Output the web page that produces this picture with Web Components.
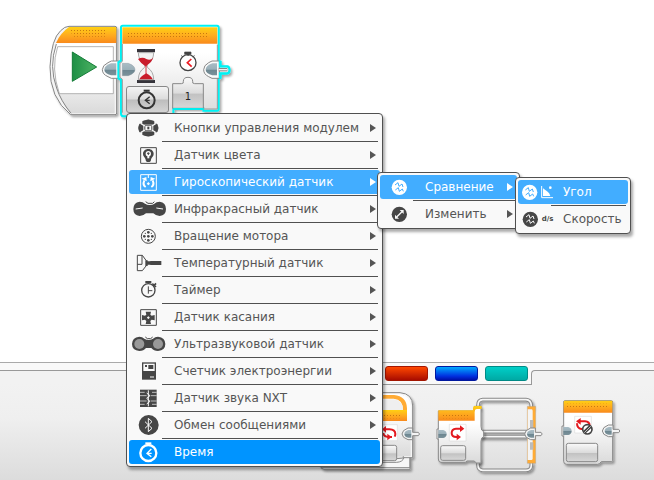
<!DOCTYPE html>
<html lang="ru">
<head>
<meta charset="utf-8">
<title>Программа</title>
<style>
html,body{height:100%;margin:0}
body{font-family:"DejaVu Sans",Verdana,sans-serif;font-size:12px;color:#505050;background:#fff;overflow:hidden}
</style>
</head>
<body>
<ev3-editor>
  <ev3-program slot="canvas"></ev3-program>
  <ev3-palette slot="palette"></ev3-palette>
  <ev3-menu slot="overlay" label="Режим" style="--x:126px;--y:113px;--min:251px">
    <ev3-item icon="bricks" more>Кнопки управления модулем</ev3-item>
    <ev3-item icon="color" more>Датчик цвета</ev3-item>
    <ev3-item icon="gyro" more open>Гироскопический датчик</ev3-item>
    <ev3-item icon="infrared" more>Инфракрасный датчик</ev3-item>
    <ev3-item icon="motor" more>Вращение мотора</ev3-item>
    <ev3-item icon="temperature" more>Температурный датчик</ev3-item>
    <ev3-item icon="timer" more>Таймер</ev3-item>
    <ev3-item icon="touch" more>Датчик касания</ev3-item>
    <ev3-item icon="ultrasonic" more>Ультразвуковой датчик</ev3-item>
    <ev3-item icon="energy" more>Счетчик электроэнергии</ev3-item>
    <ev3-item icon="sound" more>Датчик звука NXT</ev3-item>
    <ev3-item icon="message" more>Обмен сообщениями</ev3-item>
    <ev3-item icon="time" current>Время</ev3-item>
  </ev3-menu>
  <ev3-menu slot="overlay" label="Гироскопический датчик" style="--x:377px;--y:172px;--min:137px">
    <ev3-item icon="compare" more open>Сравнение</ev3-item>
    <ev3-item icon="change" more>Изменить</ev3-item>
  </ev3-menu>
  <ev3-menu slot="overlay" label="Сравнение" style="--x:515px;--y:177px;--min:110px">
    <ev3-item icon="angle" open>Угол</ev3-item>
    <ev3-item icon="rate">Скорость</ev3-item>
  </ev3-menu>
</ev3-editor>
<script>
const define = (name, html, setup) => customElements.define(name, class extends HTMLElement {
  constructor() {
    super();
    this.attachShadow({mode: 'open'}).innerHTML = html(this);
  }
  connectedCallback() { if (setup) setup(this, this.shadowRoot); }
});

/* Icons use a 120x72 grid, drawn at 40x24. The "paper" colour is the row's background. */
const watch = (x, y, r, w) => `
  <circle cx="${x}" cy="${y}" r="${r}" fill="none" stroke="currentColor" stroke-width="${w}"/>
  <path d="M${x-9} ${y-r-8}h18v6h-18z" fill="currentColor"/>`;
const squiggle = (x, y, c) => `
  <circle cx="${x}" cy="${y}" r="23" fill="currentColor"/>
  <path d="M${x-13} ${y-7}l9-7 3 11 9-7 3 9M${x-12} ${y+8}l9-7 3 11 9-7 3 7" fill="none" stroke="${c}" stroke-width="3"/>`;
const icons = {
  bricks: `<path d="M41 16q17-9 34 0v9h-34zM41 56q17 9 34 0v-9h-34zM42 26v20l-10 2q-7-12 0-24zM74 26v20l10 2q7-12 0-24z" fill="currentColor" stroke="currentColor" stroke-width="2"/>
    <path d="M46 27h24v18H46z" fill="currentColor"/><path d="M37 24l11 6M79 24l-11 6M37 48l11-6M79 48l-11-6" stroke="var(--paper)" stroke-width="4"/><path d="M49 29h18v14H49z" fill="var(--paper)"/><path d="M55 32h6v8h-6z" fill="currentColor"/>`,
  color: `<path d="M35 14h47v47H35z" fill="none" stroke="currentColor" stroke-width="3"/>
    <path d="M58 18c-10 0-16 7-16 14 0 9 7 11 8 18q0 7 8 7t8-7c1-7 8-9 8-18 0-7-6-14-16-14z" fill="currentColor"/>
    <circle cx="58" cy="32" r="8" fill="var(--paper)"/><path d="M55 38h6v8h-6z" fill="var(--paper)"/><path d="M58 28v8M54 31h8" stroke="currentColor" stroke-width="3"/>`,
  gyro: `<path d="M35 14h47v47H35z" fill="none" stroke="currentColor" stroke-width="3"/><path d="M58 14v10" stroke="currentColor" stroke-width="3"/>
    <path d="M58 36l5 5-5 5-5-5z" fill="currentColor"/><path d="M50 51Q40 45 46 31M67 51q10-6 4-20" fill="none" stroke="currentColor" stroke-width="6"/>
    <path d="M38 26l14-5 1 13zM79 26l-14-5-1 13z" fill="currentColor"/>`,
  infrared: `<path d="M32 14q10 0 16 6 14 8 28 0 6-6 16-6 19 3 19 22t-19 21q-11 0-19-8H51q-8 8-19 8-19-2-19-21t19-22z" fill="currentColor"/>
    <path d="M46 14l7 8h20l7-8z" fill="var(--paper)"/><path d="M50 14l7 5h14l5-5" fill="none" stroke="currentColor" stroke-width="3"/><path d="M20 36l21-3M82 33l20 3" stroke="var(--paper)" stroke-width="3"/>`,
  motor: `<circle cx="58" cy="37" r="21" fill="none" stroke="currentColor" stroke-width="3"/>
    <g fill="currentColor"><circle cx="58" cy="37" r="4"/><circle cx="58" cy="25" r="4"/><circle cx="58" cy="49" r="4"/><circle cx="46" cy="37" r="4"/><circle cx="70" cy="37" r="4"/><circle cx="49" cy="28" r="2"/><circle cx="67" cy="28" r="2"/><circle cx="49" cy="46" r="2"/><circle cx="67" cy="46" r="2"/></g>`,
  temperature: `<path d="M25 13h15l11 15v17L40 59H25zM25 40h14V13" fill="none" stroke="currentColor" stroke-width="3"/><path d="M50 28h6v3h8v-1h33v12H64v-1h-8v4h-6z" fill="currentColor"/>`,
  timer: `${watch(58,37,20,4)}<path d="M58 25v22M58 38h12" stroke="currentColor" stroke-width="3"/><path d="M70 17l11 10M73 25l8-9" stroke="currentColor" stroke-width="5"/>`,
  touch: `<path d="M35 14h47v47H35z" fill="none" stroke="currentColor" stroke-width="3"/><path d="M50 20h16l-2 9 4 3 9-2v16l-9-2-4 4 2 9H50l2-9-4-4-9 2V30l9 2 4-3z" fill="currentColor"/><path d="M58 34v8M54 38h8" stroke="var(--paper)" stroke-width="3"/>`,
  ultrasonic: `<path d="M31 14q9 0 15 6 13 8 26 0 6-6 15-6 22 3 22 22T87 57q-13 0-20-9H51q-7 9-20 9Q9 55 9 36t22-22z" fill="currentColor"/><circle cx="31" cy="36" r="15" fill="#999"/><circle cx="87" cy="36" r="15" fill="#999"/><path d="M43 14l6 6h20l6-6z" fill="var(--paper)"/><path d="M49 15l6 5h10l6-5" fill="none" stroke="currentColor" stroke-width="3"/>`,
  energy: `<path d="M39 10h42v52H39z" fill="currentColor"/><path d="M43 14h34v22H43z" fill="var(--paper)"/><path d="M48 18h6v6h-6zM58 18h15v12H58z" fill="currentColor"/><path d="M63 54h12" stroke="var(--paper)" stroke-width="3"/>`,
  sound: `<path d="M33 11h50v52H33z" fill="currentColor"/><path d="M33 19h14M69 19h14M33 29h20M65 29h18M33 45h20M65 45h18M33 55h14M69 55h14" stroke="var(--paper)" stroke-width="2"/><path d="M58 13v48M53 21l10 8-10 8 10 9-10 8" fill="none" stroke="var(--paper)" stroke-width="3"/>`,
  message: `<circle cx="59" cy="36" r="30" fill="currentColor"/><path d="M48 26l21 20-11 10V16l11 10-21 20" fill="none" stroke="var(--paper)" stroke-width="3"/>`,
  time: `${watch(58,39,24,7)}<path d="M67 27L54 40l13 10M54 40h14" fill="none" stroke="currentColor" stroke-width="4"/>`,
  compare: squiggle(58, 37, 'var(--paper)'),
  change: `<circle cx="58" cy="37" r="23" fill="currentColor"/><path d="M50 45l16-16" stroke="var(--paper)" stroke-width="4"/><path d="M59 24h12v12zM45 38v12h12z" fill="var(--paper)"/>`,
  angle: `${squiggle(35, 37, 'var(--paper)')}<path d="M71 18v35h34" fill="none" stroke="currentColor" stroke-width="3"/><path d="M75 25v23h22q-2-9-8-13z" fill="currentColor"/><circle cx="97" cy="23" r="4" fill="currentColor"/>`,
  rate: `${squiggle(37, 37, 'var(--paper)')}<text x="71" y="42" font-size="21" font-weight="bold" fill="currentColor">d/s</text>`
};

define('ev3-item', el => `
<style>
:host{display:block;--paper:#f9f9f9}
:host([open]){--paper:#42adff}
:host([current]){--paper:#0094ff}
button{display:flex;align-items:center;width:100%;height:24px;margin:0;padding:0 4px 0 0;border:0;border-radius:3px;background:var(--paper);color:#555;font:inherit;white-space:nowrap;text-align:left}
:host([open]) button,:host([current]) button{color:#fff}
.icon{flex:none;width:40px;height:24px;margin-right:5px}
:host(:not([open],[current])) .icon{color:#464646}
.label{flex:1}
.more{flex:none;width:6px;height:8px;margin-left:10px}
</style>
<button type="button" role="menuitem">
<svg class="icon" viewBox="0 0 120 72" aria-hidden="true">${icons[el.getAttribute('icon')] || ''}</svg>
<span class="label"><slot></slot></span>
${el.hasAttribute('more') ? '<svg class="more" viewBox="0 0 6 8" aria-hidden="true"><path d="M0 0l6 4-6 4z" fill="currentColor"/></svg>' : ''}
</button>`);

define('ev3-menu', () => `
<style>
:host{position:absolute;left:var(--x);top:var(--y);display:block;min-width:var(--min);padding:2px;border:1px solid #505050;border-radius:4px;background:#f9f9f9;box-shadow:2px 3px 3px #0005}
::slotted(ev3-item:not(:last-child)){padding-bottom:3px;background:linear-gradient(#505050,#505050) 33px 25px / calc(100% - 35px) 1px no-repeat}
</style>
<slot></slot>`, el => { el.setAttribute('role', 'menu'); el.setAttribute('aria-label', el.getAttribute('label')); });

const defs = `
<linearGradient id="or" x1="0" y1="0" x2="0" y2="1"><stop offset="0" stop-color="#ffd013"/><stop offset=".45" stop-color="#ffb01e"/><stop offset="1" stop-color="#f98a1c"/></linearGradient>
<linearGradient id="bd" x1="0" y1="0" x2="0" y2="1"><stop offset=".3" stop-color="#fff"/><stop offset="1" stop-color="#dadada"/></linearGradient>
<linearGradient id="pl" x1="0" y1="0" x2="0" y2="1"><stop offset="0" stop-color="#a9bcc5"/><stop offset=".5" stop-color="#9aafb8"/><stop offset=".55" stop-color="#6d8690"/><stop offset="1" stop-color="#7b929b"/></linearGradient>
<linearGradient id="bt" x1="0" y1="0" x2="0" y2="1"><stop offset="0" stop-color="#fafafa"/><stop offset=".5" stop-color="#dcdcdc"/><stop offset=".55" stop-color="#c2c2c2"/><stop offset="1" stop-color="#d8d8d8"/></linearGradient>
<pattern id="dt" width="9" height="9" patternUnits="userSpaceOnUse"><path d="M0 0h3v3H0z" fill="#c9780f"/></pattern>
<filter id="sh" x="-10%" y="-10%" width="125%" height="125%"><feDropShadow dx="5" dy="6" stdDeviation="3" flood-opacity=".35"/></filter>`;

/* Drawing grid: three units per pixel. */
define('ev3-program', () => `
<style>
:host{display:block;position:relative;width:196px;height:104px;margin:18px 0 0 44px}
svg{display:block;width:100%;height:100%}
button{position:absolute;padding:0;font:inherit;color:#222}
.mode{left:82px;top:68px;width:43px;height:27px;border:1px solid #888;border-radius:3px;background:linear-gradient(#f4f4f4,#dcdcdc 48%,#bdbdbd 52%,#d4d4d4)}
.value{left:130px;top:67px;width:28px;height:22px;border:0;background:none;font-size:10px}
.mode svg{width:41px;height:25px}
</style>
<svg viewBox="0 0 588 312" aria-hidden="true"><defs>${defs}
<linearGradient id="gr"><stop offset="0" stop-color="#1d8f45"/><stop offset="1" stop-color="#4fb465"/></linearGradient></defs>
<g filter="url(#sh)">
<path d="M75 25h138q5 0 5 5v255q0 5-5 5H80Q16 240 18 146 22 62 50 38q12-13 25-13z" fill="#f4f4f4" stroke="#858585" stroke-width="3"/></g>
<path d="M38 76Q10 140 35 210q14 40 45 76h132V76z" fill="url(#bd)"/><path d="M37 78Q14 146 38 210q12 38 43 76" fill="none" stroke="#858585" stroke-width="3"/>
<path d="M75 27h138q4 0 4 4v44H36q12-29 39-48z" fill="url(#or)"/><path d="M75 36h108v20H90z" fill="url(#dt)"/>
<path d="M41 86h167v141H46Q20 150 41 86z" fill="#fff" stroke="#909090" stroke-width="2"/>
<path d="M85 102l73 45-73 43z" fill="url(#gr)" stroke="#137c37" stroke-width="3"/>
<g filter="url(#sh)"><path d="M236 23h283q5 0 5 5v101l6 2v14h19q8 0 8 11t-8 11h-19v13l-6 2v91q0 5-5 5h-41v-7h-90v24H240q-9 0-9-8V185l-8-4v-47l8-5V28q0-5 5-5z" fill="url(#bd)" stroke="#00f2f4" stroke-width="6"/></g>
<path d="M224 129h-22l-10 5q-17 8-17 21 0 14 17 21l10 5h22z" fill="#fafafa" stroke="#888" stroke-width="3"/>
<path d="M217 136h-16q-20 7-20 19 0 11 20 17h16z" fill="url(#pl)"/>
<path d="M229 128l-6 5v47l6 5" fill="none" stroke="#00f2f4" stroke-width="6"/>
<path d="M235 28h285v49H235z" fill="url(#or)"/><path d="M252 40h243v21H252z" fill="url(#dt)"/>
<path d="M520 80v193h-41M235 78v52l-7 6v42l7 6v100" fill="none" stroke="#999" stroke-width="3"/>
<path d="M235 136h18q20 7 20 19 0 11-20 18h-18z" fill="url(#pl)" stroke="#78878e" stroke-width="1"/>
<path d="M526 129h-22l-10 5q-15 8-15 21 0 14 15 21l10 5h22z" fill="#fafafa" stroke="#888" stroke-width="3"/>
<path d="M519 136h-14q-20 7-20 19 0 11 20 17h14z" fill="url(#pl)"/><path d="M527 128v18h24q11 10 0 19h-24v16" fill="none" stroke="#00f2f4" stroke-width="5"/><path d="M524 155h26" stroke="#888" stroke-width="10"/><path d="M524 155h25" stroke="#f2f2f2" stroke-width="4"/>
<path d="M279 93h54v10h-54zM279 186h54v9h-54z" fill="#35333a"/>
<path d="M283 104h46q0 22-18 35l-2 5 2 5q18 12 18 36h-46q0-24 18-36l2-5-2-5q-18-13-18-35z" fill="#f3f3f3" stroke="#aaa" stroke-width="3"/>
<path d="M282 123q14-7 25 0 12 6 21-4-5 14-18 22l-4 5q-17-11-24-23z" fill="#c91c2b"/><path d="M306 142v28" stroke="#d63540" stroke-width="3"/><path d="M286 184q4-9 21-18 16 9 19 18z" fill="#c91c2b"/>
<circle cx="432" cy="134" r="24" fill="#fff" stroke="#444" stroke-width="4"/><path d="M422 102h19v7h-19zM430 108h5v4h-5zM411 112l6 5M452 112l-6 5" fill="#444" stroke="#444" stroke-width="2"/>
<path d="M442 123l-12 11 13 12" fill="none" stroke="#ed1c24" stroke-width="5"/>
<path d="M386 197h26q8 0 6-7 0-12 14-12t14 12q-2 7 6 7h26v74h-92z" fill="url(#bt)" stroke="#888" stroke-width="3"/><path d="M388 273h90" stroke="#00eeef" stroke-width="6"/>
</svg>
<button class="mode" type="button" aria-label="Режим: Время"><svg viewBox="0 0 123 75" aria-hidden="true" color="#333">${watch(59,40,24,6)}<path d="M68 29L55 40l13 10M55 40h13" fill="none" stroke="#333" stroke-width="4"/></svg></button>
<button class="value" type="button" aria-label="Порог: 1">1</button>`);

const plug = (x, y) => `<path d="M${x+30} ${y-18}h-14q-18 7-18 18t18 17h14v-12h17q7-5 0-10h-17z" fill="#f4f4f4" stroke="#888" stroke-width="3"/><path d="M${x+26} ${y-12}h-9q-12 3-12 12t12 11h9z" fill="url(#pl)"/>`;
const inlet = (x, y) => `<path d="M${x+4} ${y-15}h-4v30h4" fill="#fff" stroke="#888" stroke-width="3"/><path d="M${x+4} ${y-12}h15q10 3 10 12t-10 12h-15z" fill="url(#pl)"/>`;
const branches = 'M159 165v-14q0-16 14-17h130q16 1 16 20v10M159 310v20q0 15 14 16h130q16 0 16-16v-10M165 230h150M165 245h150';

define('ev3-palette', () => `
<style>
:host{display:block;border-top:1px solid #aaa;background:linear-gradient(#f2f2f2 20px,#efefef 55px,#dcdcdc)}
.top{display:flex;height:22px}
.left{box-sizing:border-box;width:359px;height:8px;background:#f9f9f9;border-bottom:1px solid #999}
.tabs{display:flex;gap:7px;box-sizing:border-box;padding:3px 3px 0 26px;height:22px;background:#f9f9f9;border-bottom:1px solid #999}
.right{flex:1;display:flex;flex-direction:column;background:#f9f9f9}
.right i{height:7px}
.right b{flex:1;background:#f2f2f2;border:solid #999;border-width:1px 0 0 1px;border-top-left-radius:4px}
button{box-sizing:border-box;width:43px;height:15px;padding:0;border:1px solid;border-radius:3px}
.red{background:linear-gradient(#ff4800,#a80c00);border-color:#a31500}
.blue{background:linear-gradient(#00aaff,#0030e0 70%,#0010a8);border-color:#0018a0}
.teal{background:linear-gradient(#00cfc8,#00a9a4);border-color:#008a86}
.blocks{display:flex;gap:14px;padding:5px 0 0 318px;height:90px}
svg{display:block;flex:none;height:90px}
</style>
<div class="top"><div class="left"></div>
<div class="tabs"><button class="red" type="button" aria-label="Операции с данными"></button><button class="blue" type="button" aria-label="Дополнения"></button><button class="teal" type="button" aria-label="Мои блоки"></button></div>
<div class="right"><i></i><b></b></div></div>
<div class="blocks">
<svg width="103" viewBox="54 105 309 270" role="img" aria-label="Цикл"><defs>${defs}</defs>
<g filter="url(#sh)"><path d="M150 113h150q38 3 38 40v155h-8v35H72q-10 0-10-12v-20h228l20-2V120" fill="#f6f6f6" stroke="#888" stroke-width="3"/></g>
<path d="M230 117h68q32 4 34 37v150H232z" fill="url(#bd)"/><path d="M230 120h52q38 4 39 40v38h-12v-33q0-32-28-34h-51z" fill="#ffab35"/><path d="M230 133h51q28 2 28 32h-79z" fill="#efefef"/><path d="M230 165h91v33h-91z" fill="url(#or)"/><path d="M250 174h55v16h-55z" fill="url(#dt)"/>
<path d="M235 209h57v48h-57z" fill="#fff" stroke="#ddd" stroke-width="2"/><path d="M256 223h12q18 1 18 14 0 4-2 8M276 246h-10q-16-1-16-12" fill="none" stroke="#e3191f" stroke-width="6"/><path d="M258 213v20l-12-10zM262 236v20l13-10z" fill="#e3191f"/>
<rect x="190" y="271" width="100" height="46" rx="6" fill="url(#bt)" stroke="#888" stroke-width="3"/>
<path d="M236 322h54q18-1 22-14h18v30H62" fill="none" stroke="#888" stroke-width="3"/>${plug(308,237)}</svg>
<svg width="110" viewBox="30 105 330 270" role="img" aria-label="Переключатель">
<g fill="none" stroke-linejoin="round"><path d="${branches}" stroke="#888" stroke-width="11" filter="url(#sh)"/><path d="${branches}" stroke="#f6f6f6" stroke-width="5"/></g>
<path d="M40 168h108v-14h20v60q0 14 8 16v15q-8 2-8 14v65h-14l-6-6h-22l-5 4H48q-8 0-8-10z" fill="url(#bd)" stroke="#888" stroke-width="3" filter="url(#sh)"/>
<path d="M40 166h104v-7q0-6 6-6h20v9h-14q-7 0-7 10v25H40z" fill="url(#or)"/><path d="M54 174h80v16H54z" fill="url(#dt)"/>
<path d="M73 208h50v50H73z" fill="#fff" stroke="#ddd" stroke-width="2"/><path d="M106 221H93q-13 1-13 13t14 12h4" fill="none" stroke="#e3191f" stroke-width="6"/><path d="M105 211v20l13-10zM95 236v20l13-10z" fill="#e3191f"/>
<rect x="47" y="272" width="75" height="44" rx="6" fill="url(#bt)" stroke="#888" stroke-width="3"/>${inlet(36,237)}
<path d="M307 154h25v171h-25z" fill="#ffab35" stroke="#999" stroke-width="1"/><path d="M308 163h12q3 0 3 5v142q0 5-3 5h-12z" fill="#f4f4f4"/><path d="M315 195h10v25h-10zM315 262h10v22h-10z" fill="#bbb"/>${plug(301,237)}</svg>
<svg width="70" viewBox="75 105 210 270" role="img" aria-label="Прерывание цикла">
<path d="M92 137h140q4 0 4 4v175q0 4-4 4h-30q-6 8-11 8H98q-9 0-9-9V141q0-4 3-4z" fill="url(#bd)" stroke="#888" stroke-width="3" filter="url(#sh)"/>
<path d="M91 137h144v36H89v-32z" fill="url(#or)"/><path d="M99 146h126v16H99z" fill="url(#dt)"/>
<path d="M122 184h50v50h-50z" fill="#fff" stroke="#ddd" stroke-width="2"/><path d="M138 199h15q14 1 14 13M129 205q0 15 13 17h8" fill="none" stroke="#e3191f" stroke-width="6"/><path d="M140 189v20l-14-10z" fill="#e3191f"/>
<circle cx="160" cy="223" r="14" fill="#fff" stroke="#444" stroke-width="5"/><path d="M151 232l19-18" stroke="#444" stroke-width="10"/><path d="M151 233l19-19" stroke="#fff" stroke-width="2"/>
<rect x="97" y="265" width="94" height="55" rx="6" fill="url(#bt)" stroke="#888" stroke-width="3"/>${inlet(84,228)}${plug(207,228)}</svg>
</div>`);

define('ev3-editor', () => `
<style>
:host{position:relative;display:flex;flex-direction:column;height:100%}
main{flex:1;min-height:0;background:#fff}
</style>
<main><slot name="canvas"></slot></main>
<slot name="palette"></slot>
<slot name="overlay"></slot>`);
</script>
</body>
</html>
